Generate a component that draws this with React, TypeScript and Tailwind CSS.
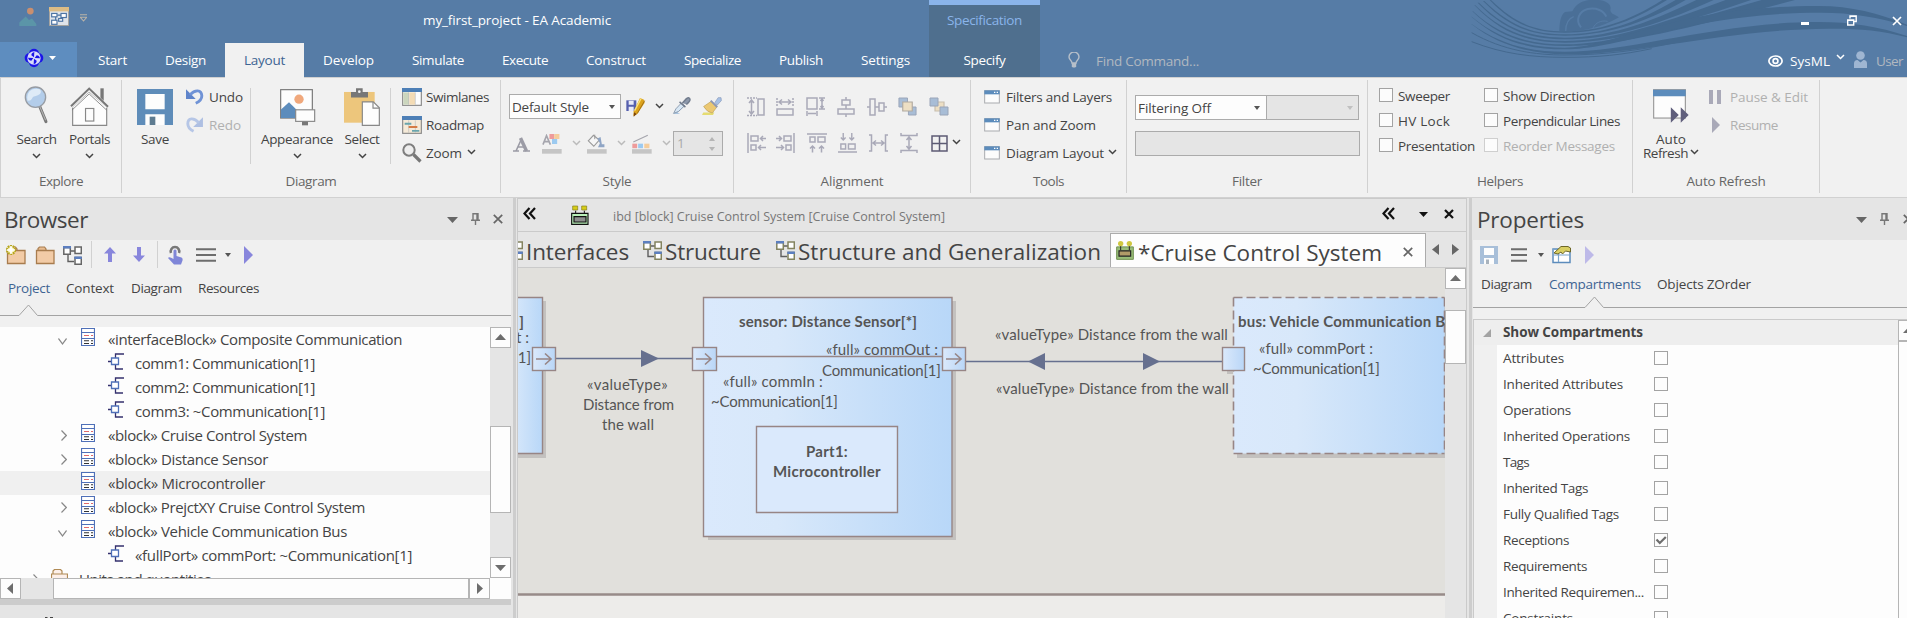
import React, { useLayoutEffect, useRef } from 'react';

/* Text whose tracking is tuned so that the run takes `w` pixels. */
function T({ w, className = '', children }: { w?: number; className?: string; children: string }) {
  const ref = useRef<HTMLSpanElement>(null);
  useLayoutEffect(() => {
    const el = ref.current;
    if (!el || !w) return;
    el.style.letterSpacing = '0px';
    const natural = el.getBoundingClientRect().width;
    el.style.letterSpacing = `${(w - natural) / children.length}px`;
  }, [w, children]);
  return (
    <span ref={ref} className={`inline-block shrink-0 whitespace-pre ${className}`}>
      {children}
    </span>
  );
}

function Ic({ vb, className, children }: { vb: string; className: string; children: React.ReactNode }) {
  return (
    <svg viewBox={vb} className={`block shrink-0 ${className}`} fill="none" preserveAspectRatio="none">
      {children}
    </svg>
  );
}

const Chevron = ({ className = '', color = '#444' }: { className?: string; color?: string }) => (
  <Ic vb="0 0 9 6" className={`h-[6px] w-[9px] ${className}`}>
    <path d="M1 1l3.5 3.5L8 1" stroke={color} strokeWidth="1.5" />
  </Ic>
);

const Down = ({ className = '', color = '#555' }: { className?: string; color?: string }) => (
  <Ic vb="0 0 8 5" className={className || 'h-[4px] w-[6px]'}>
    <path d="M0 0h8L4 5z" fill={color} />
  </Ic>
);

/* ---------- header ---------- */

function Waves() {
  return (
    <svg viewBox="15 0 1311 180" className="absolute right-0 top-0 block h-[60px] w-[437px]" fill="none">
      <path d="M283 93C283 62 290 42 300 36L322 34C335 10 350 4 372 0H400C420 2 436 10 437 24C434 34 440 40 446 43L462 52C400 88 340 97 283 93z" fill="#4a6f97" />
      <path d="M302 94C302 70 310 56 326 50" stroke="#567ca6" strokeWidth="4" />
      <path d="M348 82C330 60 342 34 368 27C395 22 416 32 424 50" stroke="#567ca6" strokeWidth="6" />
      <path d="M384 84C392 68 408 60 428 64" stroke="#567ca6" strokeWidth="3" />
      <g fill="#44698f">
        <path d="M78 0C150 70 210 94 300 94C400 94 490 65 592 0H606C490 72 400 98 300 98C205 98 140 70 74 0z" />
        <path d="M58 3C140 82 210 103 300 103C410 103 510 72 632 0H662C530 75 410 107 300 107C205 107 135 85 54 3z" />
        <path d="M42 8C130 95 210 113 300 113C420 113 540 75 694 0H746C560 85 420 118 300 118C205 118 125 98 38 8z" />
        <path d="M30 15C120 106 210 123 300 123C430 123 570 78 782 0H858C590 92 430 128 300 128C205 128 115 109 28 15z" />
        <path d="M24 34C115 118 210 133 300 133C440 133 600 82 890 0H990C620 100 440 138 300 138C205 138 110 121 22 34z" />
        <path d="M20 50C115 128 210 143 300 143C450 143 620 18 1060 18C1160 18 1240 40 1326 74V78C1240 52 1160 38 1070 38C680 38 470 148 300 148C205 148 110 131 19 50z" />
        <path d="M20 72C115 141 210 155 300 155C500 155 760 66 1060 66C1160 66 1240 80 1326 108V112C1250 90 1170 85 1090 86C780 88 520 165 300 163C205 160 110 144 19 72z" />
      </g>
      <g stroke="#44698f" strokeWidth="3">
        <path d="M20 98C115 152 210 165 300 165C420 165 530 150 640 126" />
        <path d="M20 125C115 162 200 172 300 172C400 172 470 165 560 146" />
      </g>
    </svg>
  );
}

const tabs: [string, number][] = [
  ['Start', 29], ['Design', 41], ['Layout', 41], ['Develop', 51], ['Simulate', 52], ['Execute', 46],
  ['Construct', 60], ['Specialize', 57], ['Publish', 44], ['Settings', 49],
];

function Header() {
  return (
    <header className="relative flex h-[77px] bg-[#567ca6] text-[13.5px] text-white">
      <Waves />
      <div className="flex w-[929px] flex-col">
        <div className="flex h-[42px]">
          <Ic vb="56 22 54 56" className="ml-[19px] mt-[7px] h-[19px] w-[18px]">
            <circle cx="90" cy="34" r="10" fill="#c98f6f" />
            <path d="M57 78V68L76 50L86 60L95 56L108 72V78z" fill="#5b95a8" />
          </Ic>
          <Ic vb="147 22 60 56" className="ml-[12px] mt-[7px] h-[19px] w-[20px]">
            <rect x="148" y="23" width="58" height="54" fill="#dfe4ea" stroke="#a39f98" strokeWidth="3" />
            <path d="M147 22h60v13h-60z" fill="#dcbc85" />
            <g stroke="#4c74a4" strokeWidth="3.5" fill="#fff">
              <path d="M167 50v15M172 46h12M184 52v9h-10" fill="none" />
              <rect x="155" y="41" width="16" height="10" /><rect x="183" y="41" width="16" height="12" />
              <rect x="155" y="61" width="16" height="12" /><rect x="176" y="56" width="12" height="8" />
            </g>
          </Ic>
          <Ic vb="0 0 20 24" className="ml-[11px] mt-[14px] h-[8px] w-[7px]">
            <path d="M0 2h20M1 10h18L10 21z" stroke="#b9b3a8" strokeWidth="3" />
          </Ic>
          <T w={188} className="ml-[336px] mt-[10px] leading-[20px]">my_first_project - EA Academic</T>
        </div>
        <div className="flex h-[35px]">
          <div className="mr-[2px] flex w-[77px] bg-[#5e8dbf]">
            <Ic vb="0 0 60 60" className="ml-[24px] mt-[6px] h-[20px] w-[20px]">
              <g fill="#1b14e8">
                <circle cx="30" cy="17" r="15" /><circle cx="17" cy="30" r="15" /><circle cx="43" cy="30" r="15" /><circle cx="30" cy="43" r="15" />
              </g>
              <circle cx="30" cy="30" r="20" fill="#d8dcfa" />
              <path d="M31 12q-9 2-9 10l8 6zM48 31q-2-9-10-9l-6 8zM29 48q9-2 9-10l-8-6zM12 29q2 9 10 9l6-8z" fill="#1b14e8" />
            </Ic>
            <Down className="ml-[5px] mt-[14px] h-[4px] w-[7px]" color="#fff" />
          </div>
          {tabs.map(([label, w]) => (
            <div
              key={label}
              className={
                label === 'Layout'
                  ? 'mt-px flex h-[35px] items-center bg-[#f1f1f1] px-[19px] pb-px text-[#3e6493]'
                  : 'flex h-[35px] items-center px-[19px] pt-px'
              }
            >
              <T w={w}>{label}</T>
            </div>
          ))}
        </div>
      </div>
      <div className="flex w-[111px] flex-col items-center border-t-[5px] border-[#8ab4ea] bg-[#4f6f8e]">
        <T w={75} className="mt-[5px] leading-[20px] text-[#8ab4ea]">Specification</T>
        <T w={42} className="mt-[20px] leading-[20px]">Specify</T>
      </div>
      <div className="relative flex flex-1 flex-col">
        <div className="flex h-[42px] justify-end">
          <Ic vb="0 0 8 3" className="mt-[22px] h-[3px] w-[8px]"><path d="M0 0h8v3H0z" fill="#fff" /></Ic>
          <Ic vb="0 0 10 11" className="ml-[38px] mt-[15px] h-[11px] w-[10px]">
            <path d="M3 3.5V1h6.2v5.5H7M3 1.2h6.2M.7 5h6v5H.7zM.7 5.2h6" stroke="#fff" strokeWidth="1.4" />
          </Ic>
          <Ic vb="0 0 10 10" className="ml-[35px] mr-[5px] mt-[16px] h-[10px] w-[10px]">
            <path d="M1 1l8 8M9 1L1 9" stroke="#fff" strokeWidth="1.7" />
          </Ic>
        </div>
        <div className="flex h-[35px] items-center">
          <Ic vb="0 0 12 16" className="ml-[28px] h-[16px] w-[12px]">
            <path d="M4 11C4 8.5 1 8 1 5a5 5 0 0 1 10 0c0 3-3 3.500-3 6z" stroke="#b6bfc9" strokeWidth="1.4" />
            <path d="M3.800 11h4.400v3.500l-1 1h-2.400l-1-1z" fill="#b6bfc9" />
          </Ic>
          <T w={103} className="ml-[16px] mt-[3px] text-[#b1b8c0]">Find Command...</T>
          <Ic vb="0 0 15 12" className="ml-auto mt-[3px] h-[12px] w-[15px]">
            <ellipse cx="7.500" cy="6" rx="6.600" ry="5" stroke="#fff" strokeWidth="1.7" />
            <circle cx="7.500" cy="6" r="2.400" stroke="#fff" strokeWidth="1.700" />
          </Ic>
          <T w={40} className="ml-[7px] mt-[3px]">SysML</T>
          <Chevron className="mb-[6px] ml-[6px]" color="#fff" />
          <Ic vb="0 0 13 17" className="ml-[9px] h-[17px] w-[13px]">
            <circle cx="6.500" cy="4.500" r="4.300" fill="#9fb6d2" />
            <path d="M0 17v-4.500q0-3.500 3.500-3.500l3 2.500 3-2.500q3.500 0 3.500 3.500V17z" fill="#9fb6d2" />
          </Ic>
          <T w={27} className="ml-[9px] mr-[4px] mt-[3px] text-[#b1b8c0]">User</T>
        </div>
      </div>
    </header>
  );
}

/* ---------- ribbon ---------- */

function Group({ label, w, className, children }: { label: string; w: number; className: string; children: React.ReactNode }) {
  return (
    <section className={`flex shrink-0 ${className}`}>
      <div className="flex min-w-0 flex-1 flex-col">
        <div className="flex h-[89px]">{children}</div>
        <div className="text-center leading-[29px] text-[#666]"><T w={w}>{label}</T></div>
      </div>
      <div className="mt-[2px] h-[113px] w-px shrink-0 bg-[#d1d1d1]" />
    </section>
  );
}

function Big({ label, w, className, chevron, children }: { label: string; w: number; className: string; chevron?: boolean; children: React.ReactNode }) {
  return (
    <div className={`flex shrink-0 flex-col items-center ${className}`}>
      <div className="mt-[8px] flex h-[40px] items-end">{children}</div>
      <T w={w} className="mt-[3px] leading-[20px]">{label}</T>
      {chevron && <Chevron className="mt-[4px]" />}
    </div>
  );
}

const Sep = ({ className }: { className: string }) => <div className={`mt-[10px] h-[76px] w-px shrink-0 bg-[#d1d1d1] ${className}`} />;
const WindowIcon = () => (
  <Ic vb="0 0 48 42" className="h-[14px] w-[16px]">
    <rect x="2" y="2" width="44" height="37" fill="#fcfcfc" stroke="#a9abaf" strokeWidth="3" />
    <path d="M1 1h46v12H1z" fill="#5c8cbc" />
    <path d="M30 5h4v4h-4zM38 5h4v4h-4z" fill="#fff" />
  </Ic>
);
const Box = ({ dim }: { dim?: boolean }) => (
  <div className={`mb-px h-[14px] w-[14px] shrink-0 border bg-[#fcfcfc] ${dim ? 'border-[#cfcfcf]' : 'border-[#a3a3a3]'}`} />
);

const P = '#a9a9b8';

function Ribbon() {
  return (
    <div className="flex h-[121px] border-b border-l border-t border-[#d1d1d1] bg-[#f1f1f1] text-[13.5px] text-[#444]">
      <Group label="Explore" w={44} className="w-[121px]">
        <Big label="Search" w={40} className="ml-[10px] w-[51px]" chevron>
          <Ic vb="72 257 74 112" className="mb-[2px] h-[38px] w-[25px]">
            <path d="M118 316L137 362" stroke="#777" strokeWidth="9" strokeLinecap="round" />
            <path d="M118 316L136 358" stroke="#b4b4b4" strokeWidth="3" />
            <circle cx="106" cy="290" r="30" fill="#b3cdea" stroke="#979ca3" strokeWidth="4" />
            <path d="M82 300C78 268 102 262 120 267C128 282 110 285 101 288C94 291 97 302 82 300z" fill="#deebf7" />
          </Ic>
        </Big>
        <Big label="Portals" w={41} className="ml-px w-[53px]" chevron>
          <Ic vb="208 258 118 118" className="h-[39px] w-[39px]">
            <path d="M305 262v50" stroke="#777" strokeWidth="10" />
            <path d="M216 374V318L266 272L319 318V374z" fill="#fdfdfd" stroke="#888" strokeWidth="3.500" />
            <path d="M211 318L266 266L323 318" stroke="#f1f1f1" strokeWidth="10" />
            <path d="M211 316L266 263L323 318" stroke="#777" strokeWidth="6" />
            <path d="M214 328L266 279L319 328" stroke="#777" strokeWidth="2.500" />
            <rect x="255" y="323" width="25" height="38" stroke="#888" strokeWidth="3.500" />
          </Ic>
        </Big>
      </Group>

      <Group label="Diagram" w={51} className="w-[379px]">
        <Big label="Save" w={28} className="ml-[8px] w-[50px]">
          <Ic vb="411 268 108 108" className="mb-px h-[36px] w-[36px]">
            <path d="M411 268H519V376H411z" fill="#5e8cb9" />
            <path d="M436 283H494V329H436zM436 344H494V376H436z" fill="#fdfdfd" />
            <path d="M449 351H466V376H449z" fill="#5d7b90" />
          </Ic>
        </Big>
        <div className="ml-[6px] w-[64px] pt-[5px]">
          <div className="flex h-[28px] items-center gap-[5px]">
            <Ic vb="561 264 50 50" className="mb-[2px] h-[17px] w-[18px]">
              <path d="M561 268V296H588z" fill="#5f84cb" />
              <path d="M572 284C586 268 604 268 605 287C605 298 597 305 588 309" stroke="#7093d6" strokeWidth="8" />
            </Ic>
            <T w={34}>Undo</T>
          </div>
          <div className="flex h-[28px] items-center gap-[5px] text-[#b0b0b0]">
            <Ic vb="554 348 50 50" className="mb-[2px] h-[17px] w-[18px]">
              <path d="M601 352V380H574z" fill="#aebfe2" />
              <path d="M590 368C576 352 559 352 559 371C559 382 567 389 575 393" stroke="#b6c6e6" strokeWidth="8" />
            </Ic>
            <T w={32}>Redo</T>
          </div>
        </div>
        <Sep className="" />
        <Big label="Appearance" w={72} className="ml-[7px] w-[78px]" chevron>
          <Ic vb="842 264 108 112" className="ml-[2px] h-[37px] w-[36px]">
            <rect x="844" y="266" width="95" height="86" fill="#fdfdfd" stroke="#777" strokeWidth="3.500" />
            <circle cx="899" cy="295" r="14" fill="#f0a87c" />
            <path d="M845 352V326L869 304L894 329V352z" fill="#5c8cbc" />
            <rect x="889" y="327" width="57" height="35" fill="#fdfdfd" stroke="#888" strokeWidth="3.500" />
            <path d="M908 363h18v11h-18z" fill="#777" />
          </Ic>
        </Big>
        <Big label="Select" w={35} className="ml-[4px] w-[44px]" chevron>
          <Ic vb="1032 261 108 115" className="h-[38px] w-[36px]">
            <path d="M1032 273h92v93h-92z" fill="#edc67c" />
            <path d="M1053 290v-17h15v-11h20v11h16v17z" fill="#777" />
            <circle cx="1078" cy="272" r="4" fill="#f1f1f1" />
            <path d="M1087 303h33l18 18v53h-51z" fill="#fdfdfd" stroke="#888" strokeWidth="3.500" />
            <path d="M1119 303v19h19" stroke="#888" strokeWidth="3.500" />
          </Ic>
        </Big>
        <Sep className="ml-[6px]" />
        <div className="ml-[11px] pt-[5px]">
          <div className="flex h-[28px] items-center gap-[4px]">
            <Ic vb="0 0 60 54" className="h-[18px] w-[20px]">
              <rect x="2" y="2" width="56" height="50" fill="#fdfdfd" stroke="#8a8a8a" strokeWidth="3.500" />
              <path d="M4 13h17v37H4z" fill="#cbd6bd" /><path d="M22 13h17v37H22z" fill="#f4dcb5" />
              <path d="M20 13v37M40 13v37" stroke="#bbb" strokeWidth="2" />
              <path d="M0 0h60v12H0z" fill="#4d7fb6" />
            </Ic>
            <T w={63}>Swimlanes</T>
          </div>
          <div className="flex h-[28px] items-center gap-[4px]">
            <Ic vb="0 0 60 54" className="h-[18px] w-[20px]">
              <rect x="2" y="2" width="56" height="50" fill="#f5ead8" stroke="#8a8a8a" strokeWidth="3.500" />
              <path d="M20 13v37M40 13v37" stroke="#bbb" strokeWidth="2" />
              <path d="M0 0h60v12H0z" fill="#4d7fb6" />
              <path d="M8 20h20v6H8zM30 42h22v5H30z" fill="#69a5ad" /><path d="M20 30h26v6H20z" fill="#d57c45" />
            </Ic>
            <T w={58}>Roadmap</T>
          </div>
          <div className="flex h-[28px] items-center gap-[4px]">
            <Ic vb="0 0 20 20" className="h-[20px] w-[20px]">
              <circle cx="7" cy="7" r="5.700" fill="#eee" stroke="#7e7e7e" strokeWidth="2" />
              <path d="M11.500 11.500l7 7" stroke="#777" strokeWidth="3.200" />
            </Ic>
            <T w={36}>Zoom</T>
            <Chevron className="mb-[3px] ml-px" />
          </div>
        </div>
      </Group>

      <Group label="Style" w={29} className="w-[233px]">
        <div className="ml-[8px] flex flex-col">
          <div className="mt-[16px] flex h-[25px] items-center">
            <div className="flex h-[25px] w-[112px] items-center justify-between border border-[#ababab] bg-[#fdfdfd] pl-[2px] pr-[5px]">
              <T w={77} className="mt-px">Default Style</T>
              <Down />
            </div>
            <Ic vb="378 292 60 60" className="ml-[5px] h-[20px] w-[20px]">
              <path d="M379 302h30v32h-30z" fill="#5660ae" /><path d="M386 303h15v12h-15zM386 321h15v13h-15z" fill="#e8eaf8" />
              <path d="M420 295l12 5l2 9l-22 34l-12 6l1-14z" fill="#dda31c" /><path d="M423 297l-19 36" stroke="#f9e27d" strokeWidth="4" />
              <path d="M402 338l8 5l-9 8z" fill="#7a430c" /><path d="M434 303l-22 38" stroke="#946512" strokeWidth="2.500" />
            </Ic>
            <Chevron className="ml-[9px] mt-[-2px]" />
            <Ic vb="512 291 58 58" className="ml-[8px] h-[19px] w-[19px]">
              <path d="M513 343h24l-8-4l22-21l-9-7l-19 22l-4 8z" fill="#a9c3de" />
              <path d="M517 341l7-14l17-18l9 9l-18 17z" fill="#d8e7f4" stroke="#7d8ea3" strokeWidth="2.500" />
              <path d="M535 306l18 16M544 309l12-13q10-6 11 3q0 6-11 15" stroke="#717b8c" strokeWidth="4.500" fill="#8d98ab" />
            </Ic>
            <Ic vb="602 291 62 58" className="ml-[11px] h-[19px] w-[20px]">
              <path d="M602 346l4-8h34l-4 8z" fill="#e5dc72" />
              <path d="M607 320l24-16l18 16l-15 20q-16-2-27-20z" fill="#ecc872" stroke="#bb9f55" strokeWidth="2" />
              <path d="M629 302l20 20" stroke="#8d97b5" strokeWidth="6" />
              <path d="M642 308l10-15h9l1 9l-13 14z" fill="#a7c0e5" stroke="#8697b8" strokeWidth="2" />
            </Ic>
          </div>
          <div className="mt-[12px] flex h-[25px] items-center">
            <Ic vb="0 0 17 15" className="ml-[4px] mt-px h-[15px] w-[17px]">
              <path d="M0 14h6M10 14h7M3 14L8.500 2M5 10h6" stroke="#9b9ba5" strokeWidth="1.600" /><path d="M7.500 1l6 13" stroke="#9b9ba5" strokeWidth="3.400" />
            </Ic>
            <Ic vb="125 402 62 60" className="ml-[12px] mt-px h-[20px] w-[20px]">
              <path d="M148 402h15v15h-15z" fill="#ee9b9b" /><path d="M163 402h16v15h-16z" fill="#f5cd9c" /><path d="M156 417h16v15h-16z" fill="#9ccaf0" />
              <path d="M128 434l11-27l12 27M131 425h16" stroke="#a5a5ad" strokeWidth="5" /><path d="M125 447h61v14h-61z" fill="#c5c5c5" />
            </Ic>
            <Chevron className="ml-[10px] mt-[-2px]" color="#bbb" />
            <Ic vb="260 400 62 62" className="ml-[6px] mt-px h-[20px] w-[20px]">
              <path d="M264 421l16-17l18 15l-17 19z" stroke="#999" strokeWidth="3.500" fill="#f6f6f6" /><path d="M284 402v14" stroke="#999" strokeWidth="3" />
              <path d="M292 414l10-5l4 23h8v9h-20l6-12z" fill="#8fa5c5" /><path d="M260 447h61v14h-61z" fill="#c5c5c5" />
            </Ic>
            <Chevron className="ml-[10px] mt-[-2px]" color="#bbb" />
            <Ic vb="395 400 62 62" className="ml-[6px] mt-px h-[20px] w-[20px]">
              <path d="M399 425l45-21" stroke="#a5a5ad" strokeWidth="3.500" />
              <path d="M396 430h15v14h-15z" fill="#ee9b9b" /><path d="M414 430h15v14h-15z" fill="#9ccaf0" /><path d="M433 430h16v14h-16z" fill="#f5cd9c" /><path d="M395 447h61v14h-61z" fill="#c5c5c5" />
            </Ic>
            <Chevron className="ml-[10px] mt-[-2px]" color="#bbb" />
            <div className="ml-[2px] flex h-[25px] w-[50px] items-center justify-between border border-[#ababab] bg-[#e5e5e5] pl-[3px] pr-[7px] text-[#aaa]">
              <T>1</T>
              <Ic vb="0 0 6 14" className="h-[14px] w-[6px]"><path d="M0 4h6L3 0zM0 10h6l-3 4z" fill="#b5b5b5" /></Ic>
            </div>
          </div>
        </div>
      </Group>

      <Group label="Alignment" w={63} className="w-[237px]">
        <div className="ml-[13px] flex flex-col">
          <div className="mt-[19px] flex h-[20px] items-center">
            <Ic vb="0 0 18 20" className="h-[20px] w-[18px]">
              <path d="M0 1h10M0 18.500h10" stroke={P} strokeWidth="1.500" strokeDasharray="2 1" /><path d="M4.500 3v14M2 6l2.500-3L7 6M2 14l2.500 3L7 14M11 2h6v16h-6z" stroke={P} strokeWidth="1.500" />
            </Ic>
            <Ic vb="0 0 18 20" className="ml-[11px] h-[20px] w-[18px]">
              <path d="M1 1v9M17 1v9" stroke={P} strokeWidth="1.500" strokeDasharray="2 1" /><path d="M3 5h12M6 2.500L3 5l3 2.500M12 2.500L15 5l-3 2.500M1 12h16v6H1z" stroke={P} strokeWidth="1.500" />
            </Ic>
            <Ic vb="0 0 20 20" className="ml-[12px] h-[20px] w-[20px]">
              <path d="M1 1h10v11H1zM13 1h6M13 12h6M16 2v9M14.500 4L16 2l1.500 2M14.500 9l1.500 2 1.500-2M1 14v5M11 14v5M2 16.500h8" stroke={P} strokeWidth="1.500" />
            </Ic>
            <Ic vb="0 0 18 20" className="ml-[11px] h-[20px] w-[18px]">
              <path d="M9 0v3M5 3h8v5H5zM9 8v4M1 12h16v5H1zM9 17v3" stroke={P} strokeWidth="1.500" />
            </Ic>
            <Ic vb="0 0 20 18" className="ml-[12px] h-[18px] w-[20px]">
              <path d="M0 9h3M3 1h5v16H3zM8 9h4M12 5h5v8h-5zM17 9h3" stroke={P} strokeWidth="1.500" />
            </Ic>
            <Ic vb="0 0 20 20" className="ml-[11px] h-[20px] w-[19px]">
              <path d="M1 1h9v9H1zM11 10h8v8h-8z" fill="#a8bdd6" stroke="#9aa5b8" /><path d="M5 5h10v9H5z" fill="#eddfc4" stroke="#b0a99f" strokeWidth="1.200" />
            </Ic>
            <Ic vb="0 0 20 20" className="ml-[12px] h-[20px] w-[20px]">
              <path d="M6 5h9v9H6z" fill="#eddfc4" stroke="#c9bfae" strokeWidth="1.200" /><path d="M1 1h8v8H1zM11 10h8v8h-8z" fill="#a8bdd6" stroke="#9aa5b8" />
            </Ic>
          </div>
          <div className="mt-[16px] flex h-[20px] items-center">
            <Ic vb="0 0 20 20" className="h-[20px] w-[20px]">
              <path d="M1 0v20M4 3h7v5H4zM4 12h5v5H4zM19 5.500h-5M16 3l-2.500 2.500L16 8M19 14.500h-7M14 12l-2.500 2.500L14 17" stroke={P} strokeWidth="1.500" />
            </Ic>
            <Ic vb="0 0 20 20" className="ml-[8px] h-[20px] w-[20px]">
              <path d="M19 0v20M9 3h7v5H9zM11 12h5v5h-5zM1 5.500h5M4 3l2.500 2.500L4 8M1 14.500h7M6 12l2.500 2.500L6 17" stroke={P} strokeWidth="1.500" />
            </Ic>
            <Ic vb="0 0 20 20" className="ml-[12px] h-[20px] w-[20px]">
              <path d="M0 1h20M3 4h5v5H3zM11 4h7v5h-7zM5.500 19.500v-6M3 15.500l2.500-2.500L8 15.500M14.500 19.500v-6M12 15.500l2.500-2.500 2.500 2.500" stroke={P} strokeWidth="1.500" />
            </Ic>
            <Ic vb="0 0 20 20" className="ml-[11px] h-[20px] w-[19px]">
              <path d="M0 19h20M3 11h5v5H3zM11 11h7v5h-7zM5.500 0v6M3 4.500L5.500 7 8 4.500M14.500 0v6M12 4.500L14.500 7 17 4.500" stroke={P} strokeWidth="1.500" />
            </Ic>
            <Ic vb="0 0 19 20" className="ml-[12px] h-[20px] w-[19px]">
              <path d="M0 2h2.500v16H0M19 2h-2.500v16H19M4 10h11M7 7.500L4 10l3 2.500M12 7.500l3 2.500-3 2.500" stroke={P} strokeWidth="1.500" />
            </Ic>
            <Ic vb="0 0 18 20" className="ml-[12px] h-[20px] w-[18px]">
              <path d="M1 0v2.500h16V0M1 20v-2.500h16V20M9 4v12M6.500 7L9 4l2.500 3M6.500 13L9 16l2.500-3" stroke={P} strokeWidth="1.500" />
            </Ic>
            <Ic vb="0 0 17 17" className="ml-[13px] mt-px h-[17px] w-[17px]">
              <path d="M1 1h15v15H1zM8.500 1v15M1 8.500h15" stroke="#5d5b74" strokeWidth="1.500" />
            </Ic>
            <Chevron className="ml-[4px] mt-[-3px]" />
          </div>
        </div>
      </Group>

      <Group label="Tools" w={31} className="w-[156px]">
        <div className="ml-[13px] pt-[5px]">
          <div className="flex h-[28px] items-center gap-[6px]"><WindowIcon /><T w={106}>Filters and Layers</T></div>
          <div className="flex h-[28px] items-center gap-[6px]"><WindowIcon /><T w={90}>Pan and Zoom</T></div>
          <div className="flex h-[28px] items-center gap-[6px]"><WindowIcon /><T w={98}>Diagram Layout</T><Chevron className="mb-[3px] ml-[-2px]" /></div>
        </div>
      </Group>

      <Group label="Filter" w={30} className="w-[241px]">
        <div className="ml-[8px]">
          <div className="mt-[17px] flex h-[25px]">
            <div className="flex w-[131px] items-center justify-between border border-r-0 border-[#ababab] bg-[#fdfdfd] pl-[2px] pr-[6px]"><T w={73} className="mt-px">Filtering Off</T><Down /></div>
            <div className="flex w-[93px] items-center justify-end border border-[#ababab] bg-[#e5e5e5] pr-[5px]"><Down color="#c0c0c0" /></div>
          </div>
          <div className="mt-[11px] h-[25px] w-[225px] border border-[#ababab] bg-[#e5e5e5]" />
        </div>
      </Group>

      <Group label="Helpers" w={46} className="w-[265px]">
        <div className="ml-[11px] w-[105px] pt-[5px]">
          <div className="flex h-[25px] items-center gap-[5px]"><Box /><T w={52} className="mt-[2px]">Sweeper</T></div>
          <div className="flex h-[25px] items-center gap-[5px]"><Box /><T w={52} className="mt-[2px]">HV Lock</T></div>
          <div className="flex h-[25px] items-center gap-[5px]"><Box /><T w={77} className="mt-[2px]">Presentation</T></div>
        </div>
        <div className="pt-[5px]">
          <div className="flex h-[25px] items-center gap-[5px]"><Box /><T w={92} className="mt-[2px]">Show Direction</T></div>
          <div className="flex h-[25px] items-center gap-[5px]"><Box /><T w={117} className="mt-[2px]">Perpendicular Lines</T></div>
          <div className="flex h-[25px] items-center gap-[5px] text-[#b0b0b0]"><Box dim /><T w={112} className="mt-[2px]">Reorder Messages</T></div>
        </div>
      </Group>

      <Group label="Auto Refresh" w={79} className="w-[187px]">
        <div className="ml-[10px] flex w-[60px] flex-col">
          <Ic vb="669 266 109 103" className="ml-[10px] mt-[11px] h-[34px] w-[36px]">
            <rect x="671" y="268" width="96" height="86" fill="#fdfdfd" stroke="#999" strokeWidth="3.500" />
            <path d="M669 268h99v20h-99z" fill="#5c8cbc" /><path d="M723 321l24 24l-24 23zM753 321l24 24l-24 23z" fill="#605f7c" />
          </Ic>
          <T w={30} className="ml-[13px] mt-[7px] self-start leading-[18px]">Auto</T>
          <div className="mt-[-4px] flex items-center"><T w={45} className="leading-[18px]">Refresh</T><Chevron className="ml-[2px] mt-[-2px]" /></div>
        </div>
        <div className="ml-[6px] pt-[5px] text-[#b0b0b0]">
          <div className="flex h-[28px] items-center gap-[9px]"><Ic vb="0 0 12 14" className="h-[14px] w-[12px]"><path d="M0 0h4v14H0zM8 0h4v14H8z" fill={P} /></Ic><T w={78}>Pause &amp; Edit</T></div>
          <div className="flex h-[28px] items-center gap-[10px]"><Ic vb="0 0 8 16" className="ml-[3px] h-[16px] w-[8px]"><path d="M0 0l8 8-8 8z" fill={P} /></Ic><T w={48}>Resume</T></div>
        </div>
      </Group>
    </div>
  );
}

/* ---------- shared panel parts ---------- */

const Pin = ({ className }: { className: string }) => (
  <Ic vb="0 0 9 12" className={`h-[12px] w-[9px] ${className}`}><path d="M2 7V.8h5V7M0 7.200h9M4.500 7v5M6 1v6" stroke="#777" strokeWidth="1.400" /></Ic>
);
const Cross = ({ className, color = '#666' }: { className: string; color?: string }) => (
  <Ic vb="0 0 10 10" className={`h-[10px] w-[10px] ${className}`}><path d="M.8.8l8.400 8.400M9.200.8L.8 9.200" stroke={color} strokeWidth="1.700" /></Ic>
);
const Lines = ({ className }: { className: string }) => (
  <Ic vb="0 0 20 14" className={`h-[14px] ${className}`}><path d="M0 1.200h20M0 7h20M0 12.800h20" stroke="#6d6d6d" strokeWidth="2" /></Ic>
);
const Play = ({ color, className }: { color: string; className: string }) => (
  <Ic vb="0 0 9 18" className={`h-[18px] w-[9px] ${className}`}><path d="M0 0l9 9-9 9z" fill={color} /></Ic>
);

function ScrollButton({ dir, className = '' }: { dir: 'up' | 'down' | 'left' | 'right'; className?: string }) {
  const d = { up: 'M5 13h11L10.500 7z', down: 'M5 8h11L10.500 14z', left: 'M13 5v11L7 10.500z', right: 'M8 5v11L14 10.500z' }[dir];
  return (
    <div className={`h-[21px] w-[21px] shrink-0 border border-[#b5b5b5] bg-[#fdfdfd] ${className}`}>
      <Ic vb="1 1 19 19" className="h-full w-full"><path d={d} fill="#6d6d6d" /></Ic>
    </div>
  );
}

const StructIcon = ({ className, edge }: { className: string; edge: string }) => (
  <Ic vb="0 0 19 19" className={`h-[19px] w-[19px] ${className}`}>
    <path d="M7 5h5M5 9v6.500h6" stroke="#5f5f5f" strokeWidth="1.400" />
    <path d="M.8 1.500h6.500v6.700H.8z" fill="#fff" stroke={edge} strokeWidth="1.500" />
    <path d="M12 1h6.300v6.500H12zM12 11.500h6.300v6.700H12z" fill="#fff" stroke={edge} strokeWidth="1.500" />
    <path d="M0 0h8v2.500H0zM11.300 10.500h7.500v2.500h-7.500z" fill="#5c7fc0" />
  </Ic>
);

/* ---------- browser ---------- */

type Node = { kind: 'block' | 'port'; open?: boolean; closed?: boolean; label: string; w: number; sel?: boolean };
const nodes: Node[] = [
  { kind: 'block', open: true, label: '«interfaceBlock» Composite Communication', w: 294 },
  { kind: 'port', label: 'comm1: Communication[1]', w: 180 },
  { kind: 'port', label: 'comm2: Communication[1]', w: 180 },
  { kind: 'port', label: 'comm3: ~Communication[1]', w: 190 },
  { kind: 'block', closed: true, label: '«block» Cruise Control System', w: 199 },
  { kind: 'block', closed: true, label: '«block» Distance Sensor', w: 160 },
  { kind: 'block', label: '«block» Microcontroller', w: 157, sel: true },
  { kind: 'block', closed: true, label: '«block» PrejctXY Cruise Control System', w: 257 },
  { kind: 'block', open: true, label: '«block» Vehicle Communication Bus', w: 239 },
  { kind: 'port', label: '«fullPort» commPort: ~Communication[1]', w: 277 },
];

function TreeRow({ n }: { n: Node }) {
  return (
    <div className={`flex h-[24px] items-center leading-[24px] ${n.sel ? 'bg-[#f0f0f0]' : ''}`}>
      {n.kind === 'block' ? (
        <>
          <div className="ml-[57px] flex w-[24px] items-center">
            {n.open && <Ic vb="0 0 10 7" className="ml-px mt-[5px] h-[7px] w-[9px]"><path d="M.5.5L5 6 9.500.5" stroke="#888" strokeWidth="1.200" /></Ic>}
            {n.closed && <Ic vb="0 0 6 11" className="ml-[4px] h-[11px] w-[6px]"><path d="M.5.5l4.800 5-4.800 5" stroke="#888" strokeWidth="1.200" /></Ic>}
          </div>
          <Ic vb="0 0 14 18" className="mb-[4px] h-[18px] w-[14px]">
            <path d="M.5.5h13v17H.5z" fill="#fff" stroke="#4f70b8" strokeWidth="1.200" /><path d="M0 4.500h14M0 10.500h14" stroke="#4f70b8" />
            <path d="M3 7.500h5M10 7.500h2" stroke="#e06a6a" strokeWidth="1.200" /><path d="M3 12.800h5M10 12.800h2M3 15.500h5M10 15.500h2" stroke="#333" strokeWidth="1.100" />
          </Ic>
          <T w={n.w} className="ml-[13px]">{n.label}</T>
        </>
      ) : (
        <>
          <Ic vb="0 0 16 17" className="mb-[4px] ml-[108px] h-[17px] w-[16px]">
            <path d="M0 8.500h4M7.500 5V1H16M7.500 11v5H15" stroke="#34306e" strokeWidth="1.300" /><path d="M3.500 5h7v6.500h-7z" fill="#fff" stroke="#4f70b8" strokeWidth="1.300" />
          </Ic>
          <T w={n.w} className="ml-[11px]">{n.label}</T>
        </>
      )}
    </div>
  );
}

const Folder = ({ star, className }: { star?: boolean; className: string }) => (
  <Ic vb="0 0 20 20" className={`h-[20px] w-[20px] ${className}`}>
    <path d="M3 6V3.500L4.500 2h5L11 4v2" fill="#e8bd92" stroke="#a87c4e" strokeWidth="1.200" />
    <path d="M1.500 5.500h17.500V18.500H1.500z" fill="#f2cba6" stroke="#a87c4e" strokeWidth="1.300" />
    {star && <><circle cx="5" cy="5" r="4" fill="#fff8c8" stroke="#b5a51c" strokeWidth="2.200" strokeDasharray="1.800 .7" /><path d="M5 1v8M1 5h8" stroke="#fff" strokeWidth="1.500" /></>}
  </Ic>
);

function Browser() {
  return (
    <aside className="flex w-[511px] shrink-0 flex-col bg-[#f0f0f0] text-[#444]">
      <div className="flex h-[42px] shrink-0 bg-[#e5e5e5]">
        <T w={84} className="ml-[4px] mt-[6px] text-[22.500px] leading-[31px]">Browser</T>
        <Down className="ml-[359px] mt-[19px] h-[6px] w-[11px]" color="#666" />
        <Pin className="ml-[13px] mt-[15px]" />
        <Cross className="ml-[13px] mt-[16px]" />
      </div>
      <div className="flex h-[29px] shrink-0 items-center">
        <Folder star className="ml-[6px] mt-px" />
        <Folder className="ml-[9px] mt-px" />
        <StructIcon className="ml-[8px] mt-[2px]" edge="#666" />
        <div className="ml-[9px] h-[27px] w-px bg-[#d1d1d1]" />
        <Ic vb="0 0 12 15" className="ml-[12px] h-[15px] w-[12px]"><path d="M6 0l6 6.500H8V15H4V6.500H0z" fill="#8886dc" /></Ic>
        <Ic vb="0 0 12 15" className="ml-[17px] h-[15px] w-[12px]"><path d="M6 15l6-6.500H8V0H4v8.500H0z" fill="#8886dc" /></Ic>
        <div className="ml-[12px] h-[27px] w-px bg-[#d1d1d1]" />
        <Ic vb="0 0 15 20" className="ml-[10px] mt-px h-[20px] w-[15px]">
          <path d="M3 8a4.300 4.300 0 1 1 8 0" stroke="#777" strokeWidth="2.500" /><path d="M5.500 5.500q1.500-2 3 0V11l5 1.500q1.500.5 1 3L13 19.500H6L0 13q1-2 5.500 1z" fill="#7f86d8" />
        </Ic>
        <Lines className="ml-[13px] mt-px w-[20px]" />
        <Down className="ml-[9px] mt-px h-[4px] w-[6px]" />
        <Play color="#8886dc" className="ml-[13px] mt-px" />
      </div>
      <div className="flex h-[36px] shrink-0 items-center text-[13.500px]">
        <T w={42} className="ml-[8px] mt-[2px] text-[#3e6493]">Project</T>
        <T w={48} className="ml-[16px] mt-[2px]">Context</T>
        <T w={51} className="ml-[17px] mt-[2px]">Diagram</T>
        <T w={61} className="ml-[16px] mt-[2px]">Resources</T>
      </div>
      <Ic vb="0 0 511 22" className="h-[22px] w-[511px]"><path d="M0 10.500h19L28.500 0 37.500 10.500H511" stroke="#a3a3a3" /></Ic>
      <div className="flex h-[251px] shrink-0">
        <div className="w-[490px] overflow-hidden bg-[#fdfdfd] text-[15px]">
          {nodes.map((n) => <TreeRow key={n.label} n={n} />)}
          <div className="flex h-[24px] items-center leading-[24px]">
            <Ic vb="0 0 6 11" className="ml-[33px] h-[11px] w-[6px]"><path d="M.5.5l4.800 5-4.800 5" stroke="#888" strokeWidth="1.200" /></Ic>
            <Ic vb="0 0 17 18" className="mb-[2px] ml-[12px] h-[18px] w-[17px]"><path d="M2 5V2l1.500-1.500h6L11 2v3M.5 5h16v12.500H.5z" fill="#fdf0ea" stroke="#b08a55" strokeWidth="1.200" /></Ic>
            <T w={132} className="ml-[11px]">Units and quantities</T>
          </div>
        </div>
        <div className="flex w-[21px] flex-col bg-[#e5e5e5]">
          <ScrollButton dir="up" />
          <div className="mt-[78px] h-[87px] border border-[#b5b5b5] bg-[#fdfdfd]" />
          <ScrollButton dir="down" className="mt-[44px]" />
        </div>
      </div>
      <div className="flex h-[21px] shrink-0 bg-[#e5e5e5]">
        <ScrollButton dir="left" />
        <div className="ml-[32px] w-[416px] border border-[#b5b5b5] bg-[#fdfdfd]" />
        <ScrollButton dir="right" />
        <div className="flex-1 bg-[#fdfdfd]" />
      </div>
      <div className="h-[6px] shrink-0 bg-[#ccc]" />
      <div className="flex-1 overflow-hidden bg-[#e5e5e5]">
        <Ic vb="0 0 8 2" className="ml-[45px] mt-[12px] h-[2px] w-[8px]"><path d="M0 0h2.500v2H0zM5 0h3v2H5z" fill="#444" /></Ic>
      </div>
    </aside>
  );
}

/* ---------- diagram ---------- */

const DoubleLeft = ({ className }: { className: string }) => (
  <Ic vb="0 0 13 13" className={`h-[13px] w-[13px] ${className}`}><path d="M6.500 1L1.500 6.500l5 5.500M12 1L7 6.500l5 5.500" stroke="#111" strokeWidth="2.200" /></Ic>
);

const Port = ({ x, y, w = 23, arrow }: { x: number; y: number; w?: number; arrow?: boolean }) => (
  <g>
    <rect x={x + 0.5} y={y + 0.5} width={w} height="23" fill="url(#port)" stroke="#978585" strokeWidth="1.400" />
    {arrow && <path d={`M${x + 4} ${y + 12}h15M${x + 13} ${y + 6.5}l6 5.500-6 5.500`} stroke="#978585" strokeWidth="1.600" fill="none" />}
  </g>
);

function Canvas() {
  return (
    <div className="relative h-[350px] w-[927px] shrink-0 overflow-hidden bg-[#e1e0dc] font-[Lato,sans-serif] text-[15px] leading-[20px] text-[#555]">
      <svg viewBox="518 268 927 350" className="absolute inset-0 block h-[350px] w-[927px]" fill="none">
        <defs>
          <linearGradient id="blk"><stop offset="0" stopColor="#dae9fc" /><stop offset=".3" stopColor="#d8e8fa" /><stop offset="1" stopColor="#b8d7f8" /></linearGradient>
          <linearGradient id="port"><stop offset="0" stopColor="#dbe9fb" /><stop offset="1" stopColor="#b9d6f7" /></linearGradient>
        </defs>
        <path d="M518 595H1445V618H518z" fill="#edecea" />
        <path d="M518 594.500H1445" stroke="#978b89" strokeWidth="2.400" />
        <path d="M518 301H546V458H518zM708 301H956V540H708zM1237 301H1445V458H1237z" fill="#c3c1bf" />
        <path d="M500 297.500H542.500V453.500H500z" fill="url(#blk)" stroke="#978585" strokeWidth="1.400" />
        <path d="M703.500 297.500H952V536.500H703.500z" fill="url(#blk)" stroke="#978585" strokeWidth="1.400" />
        <path d="M756.500 426.500H897.500V512.500H756.500z" fill="#dae9fc" stroke="#978585" strokeWidth="1.400" />
        <path d="M1233.500 297.500H1444.500V453.500H1233.500z" fill="url(#blk)" />
        <path d="M1233.500 297.500H1444.500M1233.500 297.500V453.500M1233.500 453.500H1444.500M1444.500 297.500V453.500" stroke="#978585" strokeWidth="1.600" strokeDasharray="9 4" />
        <path d="M717 356.500H942" stroke="#978585" strokeWidth="1.400" />
        <path d="M556 358.500H692M966 361.500H1222" stroke="#66708f" strokeWidth="1.500" />
        <path d="M641 350l18 8.500-18 8.500zM1045 353v17l-17-8.500zM1143 353v17l17-8.500z" fill="#66708f" />
        <path d="M1227 371h6v3h-6z" fill="#c3c1bf" />
        <Port x={532} y={347} arrow /><Port x={692} y={347} w={24} arrow /><Port x={942} y={347} arrow /><Port x={1222} y={347} w={22} />
      </svg>
      <div className="absolute inset-x-0 -top-px h-[350px]">
        <T className="absolute right-[921px] top-[44px] font-bold">]</T>
        <T className="absolute right-[916px] top-[60px]">t :</T>
        <T className="absolute right-[914px] top-[80px]">1]</T>
        <T w={81} className="absolute left-[69px] top-[107px]">«valueType»</T>
        <T w={91} className="absolute left-[65px] top-[127px]">Distance from</T>
        <T w={52} className="absolute left-[84px] top-[147px]">the wall</T>
        <T w={178} className="absolute left-[221px] top-[44px] font-bold">sensor: Distance Sensor[*]</T>
        <T w={112} className="absolute left-[308px] top-[72px]">«full» commOut :</T>
        <T w={119} className="absolute left-[304px] top-[93px]">Communication[1]</T>
        <T w={100} className="absolute left-[205px] top-[104px]">«full» commIn :</T>
        <T w={127} className="absolute left-[193px] top-[124px]">~Communication[1]</T>
        <T w={42} className="absolute left-[288px] top-[174px] font-bold">Part1:</T>
        <T w={108} className="absolute left-[255px] top-[194px] font-bold">Microcontroller</T>
        <T w={233} className="absolute left-[477px] top-[57px]">«valueType» Distance from the wall</T>
        <T w={233} className="absolute left-[478px] top-[111px]">«valueType» Distance from the wall</T>
        <T w={223} className="absolute left-[720px] top-[44px] font-bold">bus: Vehicle Communication Bus</T>
        <T w={114} className="absolute left-[741px] top-[71px]">«full» commPort :</T>
        <T w={127} className="absolute left-[735px] top-[91px]">~Communication[1]</T>
      </div>
    </div>
  );
}

function Center() {
  return (
    <main className="flex w-[950px] shrink-0 flex-col border-l border-r border-[#cacaca] bg-[#e5e5e5] text-[#444]">
      <div className="flex h-[34px] shrink-0 items-start border-b border-t border-[#cacaca]">
        <DoubleLeft className="ml-[5px] mt-[8px]" />
        <Ic vb="182 28 54 60" className="ml-[35px] mt-[6px] h-[20px] w-[18px]">
          <path d="M196 45v10M222 45v10" stroke="#111" strokeWidth="3" /><path d="M187 31h15v12h-15zM214 31h15v12h-15z" fill="#d6cc18" stroke="#827c1b" strokeWidth="2" />
          <path d="M184 53h49v33h-49z" fill="#b9efb8" stroke="#111" strokeWidth="3.500" /><path d="M191 63h36v16h-36z" fill="#8e8e8e" stroke="#111" strokeWidth="3.500" />
        </Ic>
        <T w={332} className="ml-[24px] mt-[8px] text-[12.500px] leading-[20px] text-[#777]">ibd [block] Cruise Control System [Cruise Control System]</T>
        <DoubleLeft className="ml-[437px] mt-[8px]" />
        <Down className="ml-[24px] mt-[13px] h-[5px] w-[9px]" color="#111" />
        <Ic vb="0 0 10 10" className="ml-[16px] mt-[10px] h-[10px] w-[10px]"><path d="M1 1l8 8M9 1L1 9" stroke="#111" strokeWidth="2.200" /></Ic>
      </div>
      <div className="flex h-[36px] shrink-0 overflow-hidden border-b border-[#cacaca] text-[22.500px] leading-[31px]">
        <StructIcon className="-ml-[14px] mt-[9px]" edge="#83835f" />
        <T w={103} className="ml-[3px] mt-[4px]">Interfaces</T>
        <StructIcon className="ml-[14px] mt-[9px]" edge="#83835f" />
        <T w={96} className="ml-[3px] mt-[4px]">Structure</T>
        <StructIcon className="ml-[15px] mt-[9px]" edge="#83835f" />
        <T w={303} className="ml-[3px] mt-[4px]">Structure and Generalization</T>
        <div className="ml-[9px] mt-px flex h-[36px] w-[316px] shrink-0 border-l border-r border-t border-[#ababab] bg-[#fdfdfd]">
          <Ic vb="0 0 54 58" className="ml-[5px] mt-[7px] h-[19px] w-[18px]">
            <path d="M2 18h50v38H2z" fill="#98bd78" stroke="#6f9151" strokeWidth="3" /><path d="M14 12v16M40 12v16" stroke="#222" strokeWidth="3" />
            <circle cx="14" cy="8" r="8" fill="#cfc740" /><circle cx="40" cy="8" r="8" fill="#cfc740" /><path d="M9 30h35v16H9z" fill="#b09b68" stroke="#222" strokeWidth="3.500" />
          </Ic>
          <T w={244} className="ml-[4px] mt-[3px]">*Cruise Control System</T>
          <Cross className="ml-[21px] mt-[13px]" />
        </div>
        <Ic vb="0 0 7 11" className="ml-[6px] mt-[12px] h-[11px] w-[7px]"><path d="M7 0v11L0 5.500z" fill="#666" /></Ic>
        <Ic vb="0 0 7 11" className="ml-[13px] mt-[12px] h-[11px] w-[7px]"><path d="M0 0v11l7-5.500z" fill="#666" /></Ic>
      </div>
      <div className="flex shrink-0">
        <Canvas />
        <div className="flex flex-1 flex-col bg-[#e5e5e5]">
          <ScrollButton dir="up" />
          <div className="mt-[21px] h-[54px] w-[21px] border border-[#b5b5b5] bg-[#fdfdfd]" />
        </div>
      </div>
    </main>
  );
}

/* ---------- properties ---------- */

const props: [string, number, boolean?][] = [
  ['Attributes', 61], ['Inherited Attributes', 120], ['Operations', 68], ['Inherited Operations', 127], ['Tags', 26],
  ['Inherited Tags', 85], ['Fully Qualified Tags', 116], ['Receptions', 66, true], ['Requirements', 84],
  ['Inherited Requiremen...', 141], ['Constraints', 70],
];

function Properties() {
  return (
    <aside className="flex w-[434px] shrink-0 flex-col overflow-hidden bg-[#f0f0f0] text-[13.500px] text-[#444]">
      <div className="flex h-[42px] shrink-0 bg-[#e5e5e5]">
        <T w={107} className="ml-[4px] mt-[6px] text-[22.500px] leading-[31px]">Properties</T>
        <Down className="ml-[272px] mt-[19px] h-[6px] w-[11px]" color="#666" />
        <Pin className="ml-[13px] mt-[15px]" />
        <Cross className="ml-[14px] mt-[16px]" />
      </div>
      <div className="flex h-[29px] shrink-0 items-center">
        <Ic vb="0 0 18 18" className="ml-[7px] mt-px h-[18px] w-[18px]"><path d="M0 0h18v18H0z" fill="#a8bfd9" /><path d="M4 2h10v7H4zM4 12h10v6H4z" fill="#fdfdfd" /><path d="M6 13.500h3V18H6z" fill="#a9b3bd" /></Ic>
        <Lines className="ml-[13px] mt-px w-[16px]" />
        <Down className="ml-[11px] mt-px h-[4px] w-[6px]" />
        <Ic vb="0 0 19 19" className="ml-[8px] h-[19px] w-[19px]">
          <path d="M1 4h17v13.500H1z" fill="#fff" stroke="#5c8cbc" strokeWidth="1.500" /><path d="M1 4.500h17M6.500 5v12M1 10h17" stroke="#7ba3cb" strokeWidth="1.200" />
          <path d="M2 8l7-6.500h7L18.500 3v4l-5-1-3 3-1.500-2-3 2z" fill="#d9cf63" stroke="#6d6728" />
        </Ic>
        <Play color="#bdb9e8" className="ml-[14px] mt-px" />
      </div>
      <div className="flex h-[28px] shrink-0 items-center">
        <T w={51} className="ml-[8px] mt-[2px]">Diagram</T>
        <T w={92} className="ml-[17px] mt-[2px] text-[#3e6493]">Compartments</T>
        <T w={94} className="ml-[16px] mt-[2px]">Objects ZOrder</T>
      </div>
      <Ic vb="0 0 434 22" className="h-[22px] w-[434px]"><path d="M0 10.500h112L121.500 0 130.500 10.500H434" stroke="#a3a3a3" /></Ic>
      <div className="flex flex-1 border-l border-t border-[#cacaca]">
        <div className="w-[424px] shrink-0">
          <div className="flex h-[25px] items-center bg-[#eee]">
            <Ic vb="0 0 8 8" className="ml-[9px] h-[8px] w-[8px]"><path d="M8 0v8H0z" fill="#a3a3a3" /></Ic>
            <T w={140} className="ml-[12px] font-bold">Show Compartments</T>
          </div>
          <div className="ml-[23px] bg-[#fdfdfd] pl-[6px]">
            {props.map(([label, w, on]) => (
              <div key={label} className="flex h-[26px] items-center">
                <div className="w-[151px]"><T w={w}>{label}</T></div>
                <div className="h-[14px] w-[14px] border border-[#a3a3a3] bg-[#fdfdfd]">
                  {on && <Ic vb="0 0 12 12" className="h-[12px] w-[12px]"><path d="M1.500 5.500l3.300 3.500 6-6" stroke="#6d6d6d" strokeWidth="2.200" /></Ic>}
                </div>
              </div>
            ))}
          </div>
        </div>
        <div className="w-[21px] shrink-0">
          <ScrollButton dir="up" />
          <div className="h-[290px] border border-[#b5b5b5] bg-[#fdfdfd]" />
        </div>
      </div>
    </aside>
  );
}

export default function App() {
  return (
    <div className="flex h-[618px] w-[1907px] flex-col overflow-hidden bg-[#e5e5e5] font-['Open_Sans','Noto_Sans',sans-serif]">
      <Header />
      <Ribbon />
      <div className="flex h-[420px] overflow-hidden">
        <Browser />
        <div className="ml-[2px] mr-[1px] w-[3px] shrink-0 bg-[#cdcdcd]" />
        <Center />
        <div className="ml-[2px] mr-[1px] w-[3px] shrink-0 bg-[#cdcdcd]" />
        <Properties />
      </div>
    </div>
  );
}
